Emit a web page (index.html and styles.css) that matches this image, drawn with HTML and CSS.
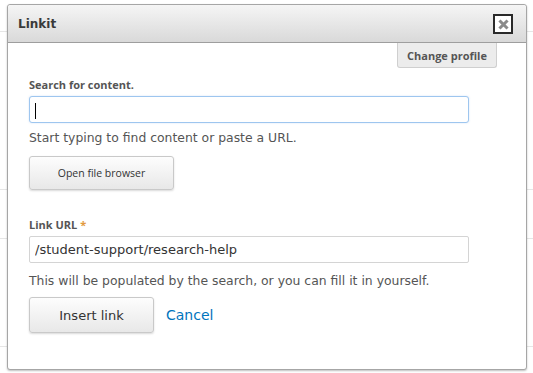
FILE: index.html
```html
<!DOCTYPE html>
<html>
<head>
    <title>Linkit</title>
    <link rel="stylesheet" href="styles.css">
</head>
<body>
    <div class="page">
        <div class="page-row row-1"></div>
        <div class="page-row row-2"></div>
        <div class="page-row row-3"></div>
        <div class="page-row row-4"></div>
    </div>

    <div class="dialog">
        <div class="dialog-titlebar">
            <span class="dialog-title">Linkit</span>
            <button class="dialog-close" title="Close">
                <svg width="11" height="11" viewBox="0 0 11 11">
                    <path d="M2.5 2.5 L8.5 8.5 M8.5 2.5 L2.5 8.5" stroke="#8a8a8a" stroke-width="3" stroke-linecap="square"/>
                </svg>
            </button>
        </div>

        <div class="dialog-content">
            <div class="profile-bar">
                <button class="profile-tab">Change profile</button>
            </div>

            <div class="form-item form-item-search">
                <label class="form-label">Search for content.</label>
                <input class="form-text is-focused" type="text" value="">
                <div class="description">Start typing to find content or paste a URL.</div>
            </div>

            <button class="button button-small">Open file browser</button>

            <div class="form-item form-item-url">
                <label class="form-label">Link URL <span class="required">*</span></label>
                <input class="form-text" type="text" value="/student-support/research-help">
                <div class="description">This will be populated by the search, or you can fill it in yourself.</div>
            </div>

            <div class="form-actions">
                <button class="button">Insert link</button>
                <a class="link-cancel" href="#">Cancel</a>
            </div>
        </div>
    </div>
</body>
</html>
```

FILE: styles.css
```css
* {
    margin: 0;
    padding: 0;
    box-sizing: border-box;
}

body {
    font-family: "DejaVu Sans", "Open Sans", sans-serif;
    background: #fff;
    color: #333;
    width: 533px;
    height: 373px;
    overflow: hidden;
}

/* Page behind the dialog */
.page {
    display: flex;
    flex-direction: column;
}

.page-row {
    border-bottom: 1px solid #e6e6e6;
}

.row-1 { height: 32px; }
.row-2 { height: 158px; }
.row-3 { height: 49px; }
.row-4 { height: 108px; }

/* Dialog overlay */
.dialog {
    position: absolute;
    left: 7px;
    top: 4px;
    width: 520px;
    height: 366px;
    background: #fff;
    border: 1px solid #a6a6a6;
    border-radius: 3px;
    box-shadow: 0 1px 2px rgba(0, 0, 0, 0.25);
    display: flex;
    flex-direction: column;
}

.dialog-titlebar {
    height: 38px;
    display: flex;
    align-items: center;
    justify-content: space-between;
    padding: 0 13px 0 10px;
    background: linear-gradient(to bottom, #f5f5f5 0%, #d9d9d9 100%);
    border-bottom: 1px solid #9e9e9e;
    border-radius: 3px 3px 0 0;
}

.dialog-title {
    font-size: 12px;
    font-weight: bold;
    color: #3a3a3a;
}

.dialog-close {
    width: 20px;
    height: 20px;
    background: #fff;
    border: 2px solid #2a2a2a;
    display: flex;
    align-items: center;
    justify-content: center;
    margin-top: 1px;
}

.dialog-content {
    padding: 0 20px 0 21px;
}

.profile-bar {
    display: flex;
    justify-content: flex-end;
    padding-right: 9px;
}

.profile-tab {
    font-family: "Open Sans", sans-serif;
    font-size: 11px;
    font-weight: bold;
    color: #555;
    background: #ececec;
    border: 1px solid #cfcfcf;
    border-top: none;
    border-radius: 0 0 3px 3px;
    width: 100px;
    height: 25px;
}

.form-item-search {
    margin-top: 9px;
}

.form-item-url {
    margin-top: 27px;
}

.form-item-url .description {
    margin-top: 10px;
}

.form-label {
    display: block;
    font-family: "Open Sans", sans-serif;
    font-size: 11px;
    font-weight: bold;
    color: #555;
    margin-bottom: 4px;
}

.required {
    color: #e29a3e;
}

.form-text {
    display: block;
    width: 440px;
    height: 27px;
    font-family: inherit;
    font-size: 13px;
    color: #333;
    padding: 0 5px;
    border: 1px solid #d4d4d4;
    border-radius: 2px;
    background: #fff;
    outline: none;
}

.form-text.is-focused {
    border-color: #9ec6ef;
    box-shadow: 0 0 2px rgba(120, 170, 230, 0.35);
    border-radius: 3px;
    background: #fff url("data:image/svg+xml;utf8,<svg xmlns='http://www.w3.org/2000/svg' width='10' height='20'><rect x='5' y='4' width='1' height='16' fill='black'/></svg>") no-repeat 0 2px;
}

.description {
    font-size: 12.4px;
    color: #555;
    margin-top: 7px;
}

.button {
    font-family: inherit;
    font-size: 13px;
    color: #333;
    background: linear-gradient(to bottom, #fdfdfd 0%, #e8e8e8 100%);
    border: 1px solid #c9c9c9;
    border-radius: 3px;
    box-shadow: 0 1px 2px rgba(0, 0, 0, 0.15);
    width: 125px;
    height: 36px;
}

.button-small {
    display: block;
    font-family: "Open Sans", sans-serif;
    font-size: 10.5px;
    width: 145px;
    height: 34px;
    margin-top: 11px;
}

.form-actions {
    display: flex;
    align-items: center;
    gap: 12px;
    margin-top: 9px;
}

.link-cancel {
    font-size: 14px;
    color: #0074bd;
    text-decoration: none;
}
```
